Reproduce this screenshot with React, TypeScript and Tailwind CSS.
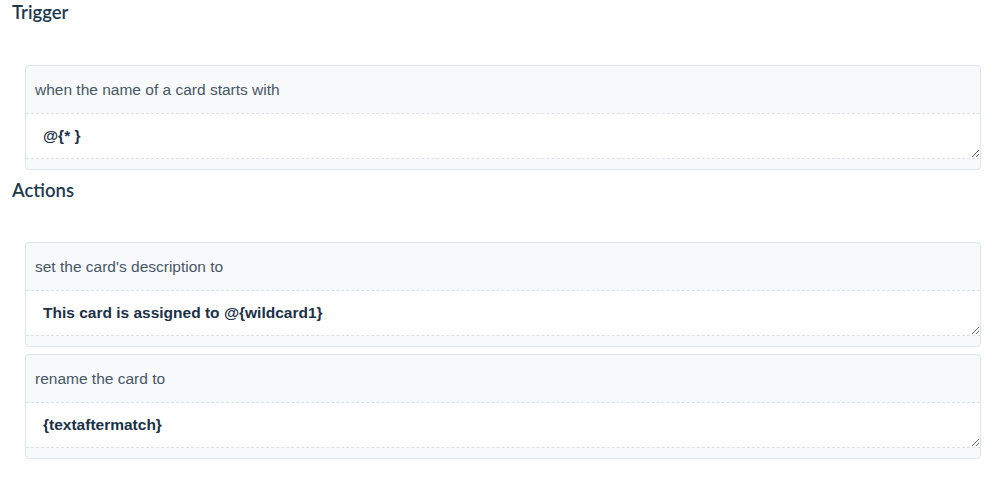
import React from 'react';

type Rule = { label: string; value: string };

const trigger: Rule = { label: 'when the name of a card starts with', value: '@{* }' };

const actions: Rule[] = [
  { label: "set the card's description to", value: 'This card is assigned to @{wildcard1}' },
  { label: 'rename the card to', value: '{textaftermatch}' },
];

function RuleCard({ label, value }: Rule) {
  return (
    <div className="rounded border border-[#e1e4e8] bg-[#f8f9fa] pb-[10px]">
      <div className="flex h-[47px] items-center px-[9px] text-[15.5px] text-[#475766]">{label}</div>
      <textarea
        defaultValue={value}
        spellCheck={false}
        className="block h-[46px] w-full resize-y border-y border-dashed border-[#dcdfe3] bg-white px-[17px] pt-[12px] text-[15.5px] leading-[20px] font-bold text-[#1b3147] outline-none"
        style={{ fontFamily: '"Liberation Sans", Arial, sans-serif' }}
      />
    </div>
  );
}

function Heading({ children }: { children: React.ReactNode }) {
  return (
    <h2
      className="pl-3 text-[18.5px] leading-6 font-semibold text-[#1e3a4f]"
      style={{ fontFamily: 'Lato, sans-serif' }}
    >
      {children}
    </h2>
  );
}

export default function App() {
  return (
    <div className="min-h-[479px] w-[999px] bg-white" style={{ fontFamily: '"Liberation Sans", Arial, sans-serif' }}>
      <Heading>Trigger</Heading>
      <div className="ml-[25px] mr-[18px] mt-[41px]">
        <RuleCard {...trigger} />
      </div>
      <div className="mt-[8px]">
        <Heading>Actions</Heading>
      </div>
      <div className="ml-[25px] mr-[18px] mt-[40px] flex flex-col gap-[7px]">
        {actions.map(a => (
          <RuleCard key={a.label} {...a} />
        ))}
      </div>
    </div>
  );
}
